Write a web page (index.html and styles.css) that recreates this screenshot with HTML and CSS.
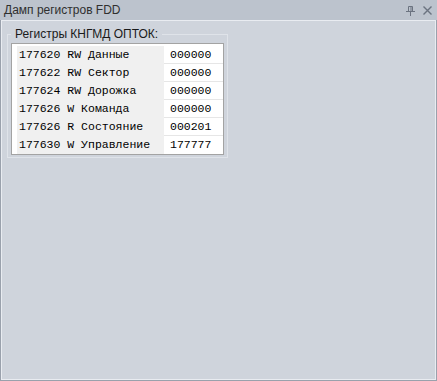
FILE: index.html
```html
<!DOCTYPE html>
<html lang="ru">
<head>
    <meta charset="UTF-8">
    <title>Дамп регистров FDD</title>
    <link rel="stylesheet" href="styles.css">
</head>
<body>

<div class="window">
    <div class="titlebar">
        <span class="title">Дамп регистров FDD</span>
        <span class="buttons">
            <svg class="btn" width="9" height="10" viewBox="0 0 9 10">
                <path d="M2.5 0.5h4v5h-4z M0 5.5h9 M4.5 6v4" fill="none" stroke="#6b7380" stroke-width="1"/>
                <path d="M5 1v4.5" stroke="#6b7380" stroke-width="1"/>
            </svg>
            <svg class="btn" width="9" height="9" viewBox="0 0 9 9">
                <path d="M0.5 0.5l8 8 M8.5 0.5l-8 8" stroke="#6b7380" stroke-width="1.4"/>
            </svg>
        </span>
    </div>

    <div class="panel">
        <fieldset class="group">
            <legend>Регистры КНГМД ОПТОК:</legend>
            <div class="reg-list">
                <div class="reg-name">177620 RW Данные</div>
                <div class="reg-value">000000</div>
                <div class="reg-name">177622 RW Сектор</div>
                <div class="reg-value">000000</div>
                <div class="reg-name">177624 RW Дорожка</div>
                <div class="reg-value">000000</div>
                <div class="reg-name">177626 W Команда</div>
                <div class="reg-value">000000</div>
                <div class="reg-name">177626 R Состояние</div>
                <div class="reg-value">000201</div>
                <div class="reg-name">177630 W Управление</div>
                <div class="reg-value last">177777</div>
            </div>
        </fieldset>
    </div>
</div>

</body>
</html>
```

FILE: styles.css
```css
html, body {
    margin: 0;
    padding: 0;
}
body {
    width: 437px;
    height: 381px;
    font-family: "Liberation Sans", Arial, sans-serif;
    font-size: 12px;
    background-color: #cfd4dc;
}
.window {
    display: flex;
    flex-direction: column;
    height: 381px;
}
.titlebar {
    display: flex;
    align-items: center;
    justify-content: space-between;
    height: 20px;
    padding: 0 5px 0 4px;
    background-color: #bcc3cd;
    color: #2f2f2f;
}
.title {
    line-height: 20px;
}
.buttons {
    display: flex;
    align-items: center;
    gap: 8px;
    padding-top: 1px;
}
.btn {
    display: block;
}
.panel {
    flex: 1;
    padding: 7px 6px 0 6px;
    background-color: #cfd4dc;
    border: 1px solid #9aa1ac;
    border-top: none;
    box-shadow: inset 1px 1px 0 #e9ecf1, inset -1px -1px 0 #e9ecf1;
}
.group {
    width: 221px;
    box-sizing: border-box;
    margin: 0;
    padding: 2px 3px 2px 3px;
    border: 1px solid #dfe3e9;
}
.group legend {
    padding: 0 4px;
    line-height: 14px;
    color: #1a1a1a;
}
.reg-list {
    display: grid;
    grid-template-columns: 147px 59px;
    grid-auto-rows: 18px;
    height: 110px;
    padding: 2px 0 0 5px;
    box-sizing: border-box;
    height: 112px;
    overflow: hidden;
    background-color: #fff;
    border: 1px solid #a3a3a3;
    font-family: "Liberation Mono", "Courier New", monospace;
    font-size: 11.5px;
    color: #000;
}
.reg-name {
    background-color: #f0f0f0;
    padding-left: 2px;
    line-height: 18px;
    white-space: nowrap;
}
.reg-value {
    padding-left: 6px;
    line-height: 17px;
    border-bottom: 1px solid #e6e6e6;
}
.reg-value.last {
    border-bottom: none;
}
```
